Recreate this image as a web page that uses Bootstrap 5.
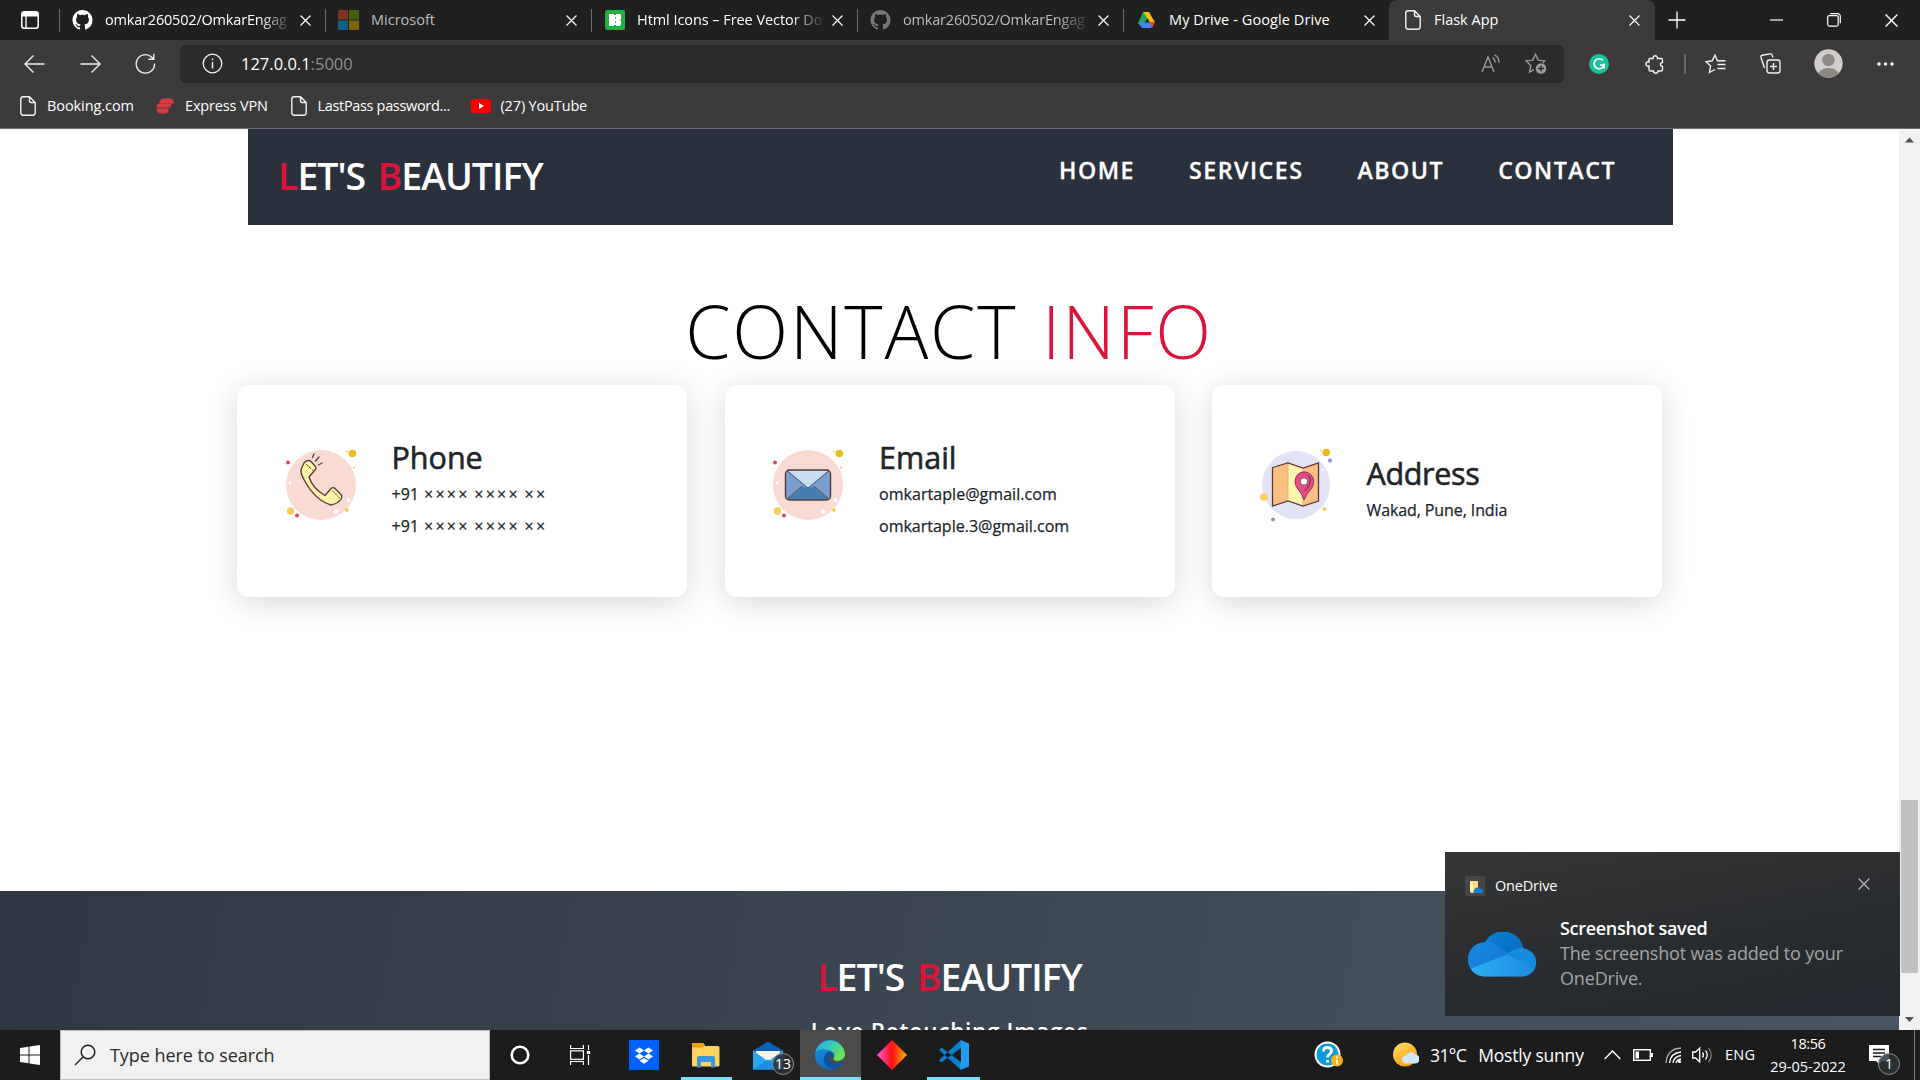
<!DOCTYPE html>
<html lang="en">
<head>
<meta charset="utf-8">
<meta name="viewport" content="width=device-width, initial-scale=1">
<title>Flask App</title>
<link href="https://cdn.jsdelivr.net/npm/bootstrap@5.3.0/dist/css/bootstrap.min.css" rel="stylesheet">
<style>
  body { font-family: "Open Sans", "Noto Sans", sans-serif; width: 1920px; height: 1080px; overflow: hidden; background: #fff; }
  svg { display: block; flex: none; }

  /* browser chrome */
  .tabstrip { height: 40px; background: #202020; font-size: 14.5px; line-height: 40px; color: #fff; }
  .strip-menu { width: 59px; padding-left: 21px; }
  .tab { width: 266px; padding: 0 14px 0 13px; position: relative; flex: none; }
  .tab::before { content: ""; position: absolute; left: 0; top: 9px; width: 1px; height: 23px; background: #6b6b6b; }
  .tab .title { flex: 1; margin: 0 7px 0 12px; white-space: nowrap; line-height: 40px; }
  .tab .fade-end { -webkit-mask-image: linear-gradient(90deg, #000 154px, transparent 188px); mask-image: linear-gradient(90deg, #000 154px, transparent 188px); }
  .tab.asleep .title { color: #bdbdbd; }
  .tab.active { width: 266px; background: #3b3b3b; border-radius: 8px 8px 0 0; padding-left: 14px; }
  .tab.active::before { display: none; }
  .tab.active .title { margin-left: 11px; }
  .tight { letter-spacing: -.19px; }
  .loose { letter-spacing: .09px; }
  .toolbar { height: 47px; background: #3b3b3b; padding-left: 7px; }
  .slot { display: flex; justify-content: center; align-items: center; flex: none; }
  .omnibox { width: 1384px; height: 38px; background: #2b2b2b; border-radius: 6px; margin-left: 8px; padding: 0 17px 0 22px; font-size: 16.5px; color: #fff; }
  .omnibox .port { color: #8f8f8f; }
  .bookmarks { height: 42px; background: #3b3b3b; border-bottom: 1px solid #6e6e70; padding: 0 0 4px 20px; font-size: 14.5px; color: #fff; }

  /* page */
  .viewport { height: 901px; }
  .site { width: 1899px; height: 901px; overflow: hidden; }
  .site-nav { width: 1425px; height: 96px; margin-left: 248px; background: #2a303c; padding: 23px 57px 0 30px; }
  .brand-name { font-size: 37.5px; line-height: 48px; font-weight: 600; letter-spacing: -1px; word-spacing: 3.5px; color: #fff; white-space: nowrap; }
  .crim { color: #dc143c; }
  .menu-links { gap: 54px; font-size: 23.2px; font-weight: 600; line-height: 32px; padding-top: 2px; letter-spacing: 1.5px; -webkit-text-stroke: .3px #fff; }
  .menu-links a { color: #fff; text-decoration: none; }
  .info-title { font-size: 73px; font-weight: 300; line-height: 96px; letter-spacing: 1.8px; word-spacing: 4px; color: #000; margin: 58px 0 6px; padding-right: 1px; }
  .cards { gap: 37.5px; padding-left: 237px; }
  .info-card { width: 450px; height: 212px; border-radius: 12px; background: #fff; box-shadow: 0 5px 30px rgba(0,0,0,.16); padding: 0 0 2px 44px; gap: 30.5px; }
  .info-card svg { margin-bottom: 10px; }
  .info-card h2 { font-size: 30.5px; font-weight: 500; line-height: 38px; margin: 0 0 2px; color: #212529; -webkit-text-stroke: .6px #212529; }
  .info-card p { font-size: 16px; font-weight: 500; line-height: 32px; margin: 0; color: #212529; -webkit-text-stroke: .25px #212529; letter-spacing: .05px; }
  .info-card .num { letter-spacing: 0; }
  .info-card .num span { letter-spacing: 2.2px; word-spacing: -1.5px; margin-left: 1px; }
  .site-footer { height: 300px; margin-top: 294px; padding-top: 62px; background: linear-gradient(100deg, #2f3842 0%, #3b4552 45%, #485664 100%); }
  .tagline { font-size: 22.5px; line-height: 32px; font-weight: 600; letter-spacing: .66px; margin-top: 15px; color: #fff; }
  .scrollbar { width: 21px; background: #f1f1f1; padding: 0 2px 0 2px; }
  .thumb { height: 173px; background: #c1c1c1; margin-top: 652px; }

  /* toast */
  .toast-box { position: absolute; left: 1445px; top: 852px; width: 455px; height: 164px; background: linear-gradient(170deg, #353637 0%, #2e2f31 35%, #262b2f 65%, #262930 100%); padding: 23px 30px 0 20px; color: #fff; }
  .app-tile { width: 20px; height: 20px; background: #464646; }
  .toast-text { font-size: 18px; line-height: 25px; color: #a3a4a5; letter-spacing: -.17px; }
  .toast-text b { font-weight: 600; color: #fff; letter-spacing: -.3px; }

  /* taskbar */
  .taskbar { height: 50px; background: #1c1c1c; color: #fff; }
  .searchbox { width: 430px; height: 50px; background: #f1f1f1; border: 1px solid #bdbdbd; font-size: 18px; color: #2b2b2b; padding: 0 0 0 13px; }
  .task { width: 61.7px; height: 50px; display: flex; justify-content: center; align-items: center; flex: none; position: relative; }
  .task.open::after { content: ""; position: absolute; left: 5px; right: 5px; bottom: 0; height: 3px; background: #76e1f9; }
  .task.front { background: #4b4b4b; }
  .task.front::after { left: 0; right: 0; }
  .count { position: absolute; width: 22px; height: 22px; border-radius: 50%; border: 1px solid #8b8b8b; background: rgba(45,50,54,.85); font-size: 14px; line-height: 20px; text-align: center; color: #fff; }
  .weather { font-size: 17.5px; }
  .clock { font-size: 14.5px; line-height: 23px; width: 78px; text-align: center; }
</style>
<script src="https://cdn.jsdelivr.net/npm/bootstrap@5.3.0/dist/js/bootstrap.bundle.min.js"></script>
</head>
<body class="d-flex flex-column">

<svg width="0" height="0" class="position-absolute">
  <defs>
    <symbol id="i-x" viewBox="0 0 11 11"><path d="M.5 .5l10 10M10.500 .5l-10 10" stroke="#fff" stroke-width="1.200" fill="none"/></symbol>
    <symbol id="i-github" viewBox="0 0 16 16"><path d="M8 0C3.580 0 0 3.580 0 8c0 3.540 2.290 6.530 5.470 7.590.4.070.550-.170.550-.380 0-.190-.010-.820-.010-1.490-2.010.370-2.530-.490-2.690-.940-.090-.230-.480-.940-.820-1.130-.280-.150-.680-.520-.010-.530.630-.010 1.080.580 1.230.820.720 1.210 1.870.870 2.330.660.070-.520.280-.870.510-1.070-1.780-.2-3.640-.890-3.640-3.950 0-.870.310-1.590.820-2.150-.080-.2-.360-1.020.080-2.120 0 0 .670-.210 2.200.820.640-.180 1.320-.270 2-.270s1.360.090 2 .270c1.530-1.040 2.200-.820 2.200-.820.440 1.100.160 1.920.080 2.120.510.560.820 1.270.820 2.150 0 3.070-1.870 3.750-3.650 3.950.290.250.540.730.540 1.480 0 1.070-.010 1.930-.010 2.200 0 .210.150.460.550.380A8.010 8.010 0 0 0 16 8c0-4.420-3.580-8-8-8z" fill="currentColor"/></symbol>
    <symbol id="i-doc" viewBox="0 0 16 20"><path d="M3 .8h6.500l5.700 5.700V17a2.200 2.200 0 0 1-2.200 2.200H3A2.200 2.200 0 0 1 .8 17V3A2.200 2.200 0 0 1 3 .8zM9.500 1v4a1.500 1.500 0 0 0 1.500 1.500h4" fill="none" stroke="#f2f2f2" stroke-width="1.400"/></symbol>
    <linearGradient id="g-od1" x1="0" y1="0" x2="1" y2="1"><stop offset="0" stop-color="#0a86d8"/><stop offset="1" stop-color="#0a5cb0"/></linearGradient>
    <linearGradient id="g-od2" x1="0" y1="0" x2="1" y2="1"><stop offset="0" stop-color="#1c8be0"/><stop offset="1" stop-color="#1272d0"/></linearGradient>
    <linearGradient id="g-od3" x1="0" y1="0" x2="1" y2="0"><stop offset="0" stop-color="#2eb0f0"/><stop offset="1" stop-color="#1a8ae0"/></linearGradient>
    <clipPath id="c-od"><path d="M16 44.500A16.500 17 0 0 1 17 10.500A20.500 20.500 0 0 1 55.500 16.600A14 14 0 0 1 55 44.500z"/></clipPath>
    <symbol id="i-cloud" viewBox="0 0 69 46"><g clip-path="url(#c-od)"><rect y="-2" width="70" height="48" fill="url(#g-od1)"/><path d="M-2 48V9h16c8-1 12 3 17 6l10 7-38 20z" fill="url(#g-od2)"/><path d="M40 21c6-4 12-6 18-5l14 4v20l-8-3z" fill="#148ce0"/><path d="M2 37l38-15 28 16v12H2z" fill="url(#g-od3)"/></g></symbol>
    <linearGradient id="g-e1" x1="0" y1="0" x2="1" y2=".5"><stop offset="0" stop-color="#2aa5e0"/><stop offset=".5" stop-color="#35c7c5"/><stop offset="1" stop-color="#6be64c"/></linearGradient>
    <linearGradient id="g-e2" x1="0" y1="0" x2=".7" y2="1"><stop offset="0" stop-color="#1b9de2"/><stop offset="1" stop-color="#0f5cb4"/></linearGradient>
    <linearGradient id="g-dm" x1="0" y1="0" x2="1" y2="0"><stop offset="0" stop-color="#ff57e0"/><stop offset=".5" stop-color="#ff1010"/><stop offset="1" stop-color="#ffb400"/></linearGradient>
    <linearGradient id="g-sun" x1="0" y1="0" x2=".6" y2="1"><stop offset="0" stop-color="#ffe16b"/><stop offset="1" stop-color="#ff9d0a"/></linearGradient>
    <symbol id="i-dots" viewBox="0 0 80 80"><circle cx="40" cy="40" r="35" fill="#f9dbd3"/><g fill="#fff"><circle cx="9" cy="38" r="1.200"/><circle cx="67.500" cy="55" r="2"/><circle cx="55" cy="66.500" r="2.300"/></g><g fill="#fbcd59"><circle cx="9.500" cy="66" r="3.700"/><circle cx="65.800" cy="65" r="2"/><circle cx="73" cy="22.500" r="1.100"/><circle cx="66" cy="6.500" r="1"/></g><circle cx="71.300" cy="8.500" r="3.800" fill="#f2bb1c"/><g fill="#ef3f57"><circle cx="7" cy="17.500" r="2"/><circle cx="16" cy="70.500" r="2"/></g></symbol>
  </defs>
</svg>

<header class="flex-shrink-0">
  <div class="tabstrip d-flex align-items-center">
    <div class="strip-menu"><svg width="18" height="18" viewBox="0 0 18 18"><rect x=".8" y=".8" width="16.400" height="16.400" rx="2.500" fill="none" stroke="#fff" stroke-width="1.500"/><path d="M1 1h16v4.500H1z" fill="#fff"/><path d="M5 5v12" stroke="#fff" stroke-width="1.300"/></svg></div>
    <div class="tab d-flex align-items-center"><svg width="21" height="20"><use href="#i-github"/></svg><span class="title fade-end tight">omkar260502/OmkarEngag</span><svg width="11" height="11"><use href="#i-x"/></svg></div>
    <div class="tab asleep d-flex align-items-center"><svg width="21" height="20" viewBox="0 0 21 20"><path d="M0 0h10v9.500H0z" fill="#7d3222"/><path d="M11 0h10v9.500H11z" fill="#42600f"/><path d="M0 10.500h10V20H0z" fill="#0e5f83"/><path d="M11 10.500h10V20H11z" fill="#83630f"/></svg><span class="title">Microsoft</span><svg width="11" height="11"><use href="#i-x"/></svg></div>
    <div class="tab d-flex align-items-center" style="padding-left:14px"><svg width="20" height="20" viewBox="0 0 20 20"><rect width="20" height="20" rx="2" fill="#20b141"/><path d="M4 4h5v1h2V4h4q1 0 1 2v3l-1 1 1 1v3q0 2-2 2h-3v-1H9v1H4z" fill="#fff"/><path d="M10.500 7v1.500M10.500 11.500v1.500" stroke="#20b141"/></svg><span class="title fade-end" style="letter-spacing:-.06px">Html Icons – Free Vector Do</span><svg width="11" height="11"><use href="#i-x"/></svg></div>
    <div class="tab asleep d-flex align-items-center"><svg width="21" height="20" style="color:#777"><use href="#i-github"/></svg><span class="title fade-end tight">omkar260502/OmkarEngag</span><svg width="11" height="11"><use href="#i-x"/></svg></div>
    <div class="tab d-flex align-items-center"><svg width="21" height="20" viewBox="0 0 21 20"><path d="M7 2h4l2 3.500L6 17.500 2 13z" fill="#1fa463"/><path d="M7.500 2h5.500l6 10.500h-5z" fill="#ffc107"/><path d="M5 12.500h13l-3 5.500H6L2 12.500z" fill="#4285f4"/><path d="M14 12.500h5L16 18z" fill="#ea4335"/></svg><span class="title loose">My Drive - Google Drive</span><svg width="11" height="11"><use href="#i-x"/></svg></div>
    <div class="tab active d-flex align-items-center"><svg width="20" height="20"><use href="#i-doc"/></svg><span class="title">Flask App</span><svg width="11" height="11" style="margin-right:1px"><use href="#i-x"/></svg></div>
    <div class="slot" style="width:44px"><svg width="18" height="18" viewBox="0 0 18 18"><path d="M9 .5v17M.5 9h17" stroke="#fff" stroke-width="1.300"/></svg></div>
    <div class="slot ms-auto" style="width:57px"><svg width="13" height="2"><path d="M0 1h13" stroke="#fff" stroke-width="1.200"/></svg></div>
    <div class="slot" style="width:57px"><svg width="14" height="14" viewBox="0 0 14 14" fill="none" stroke="#fff" stroke-width="1.200"><rect x=".7" y="2.600" width="10.500" height="10.500" rx="1.500"/><path d="M3.200 .7h7.600a2.500 2.500 0 0 1 2.500 2.500v7"/></svg></div>
    <div class="slot" style="width:58px"><svg width="13" height="13"><use href="#i-x"/></svg></div>
  </div>
  <div class="toolbar d-flex align-items-center">
    <div class="slot" style="width:55px"><svg width="21" height="18" viewBox="0 0 21 18" fill="none" stroke="#f0f0f0" stroke-width="1.400"><path d="M20.500 9H1M9.500 .5L1 9l8.500 8.500"/></svg></div>
    <div class="slot" style="width:56px"><svg width="21" height="18" viewBox="0 0 21 18" fill="none" stroke="#f0f0f0" stroke-width="1.400"><path d="M.5 9H20M11.500 .5L20 9l-8.500 8.500"/></svg></div>
    <div class="slot" style="width:54px"><svg width="21" height="21" viewBox="0 0 21 21" fill="none" stroke="#f0f0f0" stroke-width="1.400"><path d="M19.600 10.500A9.200 9.200 0 1 1 16.500 4L18.500 6M18.800 .8v5.500h-5.500"/></svg></div>
    <div class="omnibox d-flex align-items-center">
      <svg width="21" height="21" viewBox="0 0 21 21"><circle cx="10.500" cy="10.500" r="9.300" fill="none" stroke="#f0f0f0" stroke-width="1.300"/><path d="M10.500 9v6.500M10.500 5.500v1.800" stroke="#f0f0f0" stroke-width="1.500"/></svg>
      <span style="margin-left:18px;padding-top:1px">127.0.0.1<span class="port">:5000</span></span>
      <svg class="ms-auto" width="20" height="19" viewBox="0 0 20 19" fill="none" stroke="#9a9a9a" stroke-width="1.400"><path d="M1 18L7 3l6 15M3 13h8M11.500 3.500q2.500 1.500 2.500 5M13.500 .8q4.500 2.200 4.500 7.700"/></svg>
      <svg style="margin-left:24px" width="22" height="21" viewBox="0 0 22 21"><path d="M9 16.700l-4.500 2.500 1.300-6.800L1.200 7.900l6.500-.8 2.800-5.900 2.700 5.900 6.500.8-2 2" fill="none" stroke="#9a9a9a" stroke-width="1.400"/><circle cx="16" cy="15.500" r="5.300" fill="#9a9a9a"/><path d="M16 12.500v6M13 15.500h6" stroke="#2b2b2b" stroke-width="1.300"/></svg>
    </div>
    <div class="slot" style="width:70px"><svg width="20" height="20" viewBox="0 0 20 20"><circle cx="10" cy="10" r="10" fill="#15c39a"/><path d="M13.800 6.300A5 5 0 1 0 15 11h-4M15.100 9.500v5" fill="none" stroke="#fff" stroke-width="1.700"/></svg></div>
    <div class="slot" style="width:42px"><svg width="20" height="20" viewBox="0 0 20 20"><path d="M4.500 4.500H8a2.300 2.300 0 1 1 4.500 0H16A1.500 1.500 0 0 1 17.500 6v2.500a2 2 0 1 0 0 4v3a1.500 1.500 0 0 1-1.500 1.500h-3a2.100 2.100 0 1 1-4.500 0h-3A1.500 1.500 0 0 1 4 15.500V12a2.200 2.200 0 1 1 0-4V5z" fill="none" stroke="#f0f0f0" stroke-width="1.400"/></svg></div>
    <div class="slot" style="width:18px"><svg width="2" height="20"><path d="M1 0v20" stroke="#767676" stroke-width="1.500"/></svg></div>
    <div class="slot" style="width:42px"><svg width="21" height="20" viewBox="0 0 21 20" fill="none" stroke="#f0f0f0" stroke-width="1.400"><path d="M12.500 7L10 1 7.200 6.800 1 7.700l4.600 4.400-1.200 6.400L10 15.500M12.500 10.500h8M12.500 14.500h8M12 6.700h8.500"/></svg></div>
    <div class="slot" style="width:68px"><svg width="21" height="21" viewBox="0 0 21 21" fill="none" stroke="#f0f0f0" stroke-width="1.400"><rect x="7" y="7" width="13" height="13" rx="2.500"/><path d="M13.500 10v7M10 13.500h7M4.500 15L1 4.500Q.500 2.800 2.300 2.200L10 .9q1.700-.3 2.300 1.500L12.900 4.500"/></svg></div>
    <div class="slot" style="width:48px"><svg width="29" height="29" viewBox="0 0 29 29"><circle cx="14.500" cy="14.500" r="14.200" fill="#d0cdca"/><circle cx="14.500" cy="11" r="6.200" fill="#8e8882"/><path d="M4.500 24.500a10.500 8 0 0 1 20 0 14 14 0 0 1-20 0z" fill="#8e8882"/></svg></div>
    <div class="slot" style="width:66px"><svg width="17" height="4" viewBox="0 0 17 4"><g fill="#fff"><circle cx="2" cy="2" r="1.700"/><circle cx="8.500" cy="2" r="1.700"/><circle cx="15" cy="2" r="1.700"/></g></svg></div>
  </div>
  <div class="bookmarks d-flex align-items-center">
    <svg width="16" height="20"><use href="#i-doc"/></svg><span style="margin-left:11px;width:108.500px;letter-spacing:-.08px">Booking.com</span>
    <svg width="19" height="18" viewBox="0 0 20 18"><path d="M7 1h8a4 4 0 0 1 3.500 5H3.500Q4 2 7 1zM2 7h14.500q-1 3.500-4 3.500H.5Q.500 8 2 7zM.5 12H13q1 5-3.500 5H4Q.500 16 .5 12z" fill="#d93a40"/><path d="M3 6.500h15M1 11.200h14" stroke="#d93a40" stroke-opacity=".6" stroke-width="1.500"/></svg><span style="margin-left:10.500px;width:105.500px;letter-spacing:-.15px">Express VPN</span>
    <svg width="16" height="20"><use href="#i-doc"/></svg><span style="margin-left:11px;width:153px;letter-spacing:-.33px">LastPass password...</span>
    <svg width="20" height="14" viewBox="0 0 20 14"><rect width="20" height="14" rx="3.500" fill="#f00"/><path d="M8 4l5 3-5 3z" fill="#fff"/></svg><span style="margin-left:10px;letter-spacing:-.16px">(27) YouTube</span>
  </div>
</header>

<div class="viewport d-flex flex-shrink-0">
  <main class="site">
    <nav class="site-nav d-flex justify-content-between align-items-start">
      <div class="brand-name"><span class="crim">L</span>ET'S <span class="crim">B</span>EAUTIFY</div>
      <div class="menu-links d-flex"><a href="#">HOME</a><a href="#">SERVICES</a><a href="#">ABOUT</a><a href="#">CONTACT</a></div>
    </nav>
    <h1 class="info-title text-center">CONTACT <span class="crim">INFO</span></h1>
    <div class="cards d-flex">
      <div class="info-card d-flex align-items-center">
        <svg width="80" height="80" viewBox="0 0 80 80"><use href="#i-dots"/>
          <g stroke="#5d3f3d" stroke-width="1.400" stroke-linejoin="round" stroke-linecap="round"><path d="M22 20q2-4.500 5.500-4.500 1.500 0 2.500 1l4.500 5q1 2-.5 3.500l-6 7q4 12 16 18.500l6-7q1.500-1.500 3.500-.5l6.500 6.500q1.500 2 .5 4-3 5-10.500 6.500-16-5-26.500-24.500-4-7-3.500-10 .5-3 2-5.500z" fill="#fff4a8"/><path d="M25.500 19.500l7 6.500M51.500 46l7 7" fill="none" stroke-width="1" stroke-dasharray="2 2"/><path d="M31.500 12.500l1.500-3.500M34.500 16l3.500-4M37.500 20l3.500-2" fill="none"/></g></svg>
        <div><h2>Phone</h2><p class="num">+91 <span>×××× ×××× ××</span></p><p class="num">+91 <span>×××× ×××× ××</span></p></div>
      </div>
      <div class="info-card d-flex align-items-center">
        <svg width="80" height="80" viewBox="0 0 80 80" style="margin-left:-1px"><use href="#i-dots"/><rect x="17.500" y="25" width="45" height="30" rx="4" fill="#7a9fcf"/><path d="M19 54l15-13 6 2 6-2 15 13q-1 1-2 1H21z" fill="#457fb0"/><path d="M20 25.500h40L40 43z" fill="#c7dff0"/><path d="M19 26l21 17 21-17M19 54l15-13M61 54L46 41" fill="none" stroke="#62525c" stroke-width="1"/><rect x="17.500" y="25" width="45" height="30" rx="4" fill="none" stroke="#573f42" stroke-width="1.500"/></svg>
        <div style="margin-left:1px"><h2>Email</h2><p>omkartaple@gmail.com</p><p style="letter-spacing:0">omkartaple.3@gmail.com</p></div>
      </div>
      <div class="info-card d-flex align-items-center">
        <svg width="80" height="80" viewBox="0 0 80 80"><circle cx="40" cy="40" r="34" fill="#e3e3f8"/><circle cx="70.300" cy="7.500" r="3.800" fill="#f2bb1c"/><g fill="#fbcd59"><circle cx="65" cy="5.500" r="1"/><circle cx="8" cy="52" r="3.800"/><circle cx="68.500" cy="64" r="2"/></g><g fill="#8f8fc6"><circle cx="74" cy="15.500" r="2"/><circle cx="17" cy="74.500" r="2"/></g><circle cx="67" cy="25" r="1.200" fill="#fff"/>
          <path d="M16.500 22.500L32 18v38l-15.500 5zM47 23l15.500-5v38L47 61z" fill="#fbbf82"/><path d="M32 18l15 5v38l-15-5z" fill="#fff4ac"/><path d="M32 18v38M47 23v38" stroke="#c9b58a" stroke-width=".8"/><path d="M16.500 22.500L32 18l15 5 15.500-5v38L47 61l-15-5-15.500 5z" fill="none" stroke="#5a3a36" stroke-width="1.300"/><path d="M48 55q-2-6-6-11c-6-7-2-17 6-17s13 9 7 17q-5 5-7 11z" fill="#e64a87" stroke="#8b2e50" stroke-width="1"/><path d="M52 30q4 4 1 10l-4 6" fill="none" stroke="#6d2b44" stroke-width="1"/><circle cx="48" cy="36.500" r="3.700" fill="#fff" stroke="#6f5a4a" stroke-width="1"/></svg>
        <div style="margin-bottom:1px"><h2 style="letter-spacing:-.35px">Address</h2><p style="letter-spacing:-.1px">Wakad, Pune, India</p></div>
      </div>
    </div>
    <footer class="site-footer text-center">
      <div class="brand-name"><span class="crim">L</span>ET'S <span class="crim">B</span>EAUTIFY</div>
      <div class="tagline">Love Retouching Images</div>
    </footer>
  </main>
  <aside class="scrollbar d-flex flex-column align-items-stretch">
    <svg width="17" height="19" viewBox="0 0 17 19"><path d="M4 13.500l4.500-5 4.500 5z" fill="#505050"/></svg>
    <div class="thumb"></div>
    <svg class="mt-auto" width="17" height="20" viewBox="0 0 17 20"><path d="M4 7l4.500 5L13 7z" fill="#505050"/></svg>
  </aside>
</div>

<div class="taskbar d-flex flex-shrink-0">
  <div class="slot" style="width:60px"><svg width="20" height="20" viewBox="0 0 20 20"><path d="M0 3l8.500-1.200v7.700H0zM9.500 1.600L20 0v9.500H9.500zM0 10.500h8.500v7.700L0 17zM9.500 10.500H20V20L9.500 18.400z" fill="#fff"/></svg></div>
  <div class="searchbox d-flex align-items-center"><svg width="22" height="22" viewBox="0 0 22 22"><circle cx="14" cy="8" r="6.800" fill="none" stroke="#1f1f1f" stroke-width="1.500"/><path d="M9 13l-8 8" stroke="#1f1f1f" stroke-width="1.500"/></svg><span style="margin-left:14px;letter-spacing:-.06px">Type here to search</span></div>
  <div class="task" style="width:59px"><svg width="20" height="20" viewBox="0 0 20 20"><circle cx="10" cy="10" r="8.300" fill="none" stroke="#fff" stroke-width="2.500"/></svg></div>
  <div class="task" style="width:62px"><svg width="21" height="20" viewBox="0 0 21 20" fill="none" stroke="#fff" stroke-width="1.200"><path d="M.6 0v3.500h12.800V0M.6 20v-3.500h12.800V20M18.500 0v5M18.500 10v10"/><rect x=".6" y="5.800" width="12.800" height="8.500"/><path d="M16.800 6h3.400v3h-3.400z" fill="#fff" stroke="none"/></svg></div>
  <div class="task" style="width:65px"><svg width="30" height="30" viewBox="0 0 30 30"><path d="M0 0h30v30H0z" fill="#0061fe"/><path d="M10.500 7.500l4.500 3-4.500 3-4.500-3zM19.500 7.500l4.500 3-4.500 3-4.500-3zM10.500 13.500l4.500 3-4.500 3-4.500-3zM19.500 13.500l4.500 3-4.500 3-4.500-3zM15 18l4.500 2.800-4.500 3-4.500-3z" fill="#fff"/></svg></div>
  <div class="task open" style="width:61px"><svg width="28" height="26" viewBox="0 0 28 26" style="margin-right:1px"><path d="M1 1h10l2 3h13q1.500 0 1.500 1.500V23q0 1.500-1.500 1.500H1Q0 24.500 0 23V2q0-1 1-1z" fill="#ffd35c"/><path d="M1 1h10l2 2-2 2.500H0V2q0-1 1-1z" fill="#e8a200"/><path d="M5 25.500V16q0-2 2-2h14q2 0 2 2v9.500h-4V20H9v5.500z" fill="#3a96dd"/></svg></div>
  <div class="task" style="width:63px"><svg width="30" height="29" viewBox="0 0 30 28" style="margin-right:2px"><path d="M0 9L15 0l15 9v8H0z" fill="#0b61b8"/><path d="M3 9.500h24v8L15 22 3 18z" fill="#f3f3f3"/><path d="M0 9l15 11L30 9v19H0z" fill="#28a8ea"/><path d="M0 28l15-10 15 10z" fill="#1b8fe0"/></svg><span class="count" style="left:35px;top:23px">13</span></div>
  <div class="task open front" style="width:61px"><svg width="30" height="30" viewBox="0 0 30 30" style="margin-right:2px"><circle cx="15" cy="15" r="15" fill="url(#g-e2)"/><path d="M.5 12A15 15 0 0 1 30 14c0 4-3 7-7 7-3 0-5.500-1-5-2.500 2-2 2-5-.5-6.500C12 8 4 8.500 .5 12z" fill="url(#g-e1)"/><path d="M16 11.500c-4 0-7 3.500-7 8 0 6 6 10.500 11 9q5-2 7.500-6.500c-3 1.500-8 1.500-10-1-1.500-2-.5-3.500.5-4.500 0-2 0-4-2-5z" fill="#1150a0"/><path d="M15.500 15q-1.500 1.500-1 4 1.500 4.500 7 4.500 4-.5 7-3l1.500.5V17q-3 4-7 4-5 0-4.500-2.500 1-1.500 0-3.500z" fill="#4b4b4b"/></svg></div>
  <div class="task" style="width:61px"><svg width="30" height="30" viewBox="0 0 30 30"><path d="M15 0l15 15-15 15L0 15z" fill="url(#g-dm)"/></svg></div>
  <div class="task open" style="width:63px;padding-left:1px"><svg width="30" height="30" viewBox="0 0 30 30"><path d="M0 10l2.500-2.500 19.500 15V30zM0 20l2.500 2.500L22 7.500V0z" fill="#0a7fcb"/><path d="M21.500 0L30 3.500v23L21.500 30V22L13 15l8.500-7z" fill="#1f9cf0"/><path d="M22 8v14l-9-7z" fill="#1c1c1c"/></svg></div>
  <div class="slot ms-auto" style="width:44px"><svg width="30" height="28" viewBox="0 0 30 28" style="margin-right:1px"><circle cx="13.500" cy="13.500" r="13" fill="#fff"/><circle cx="13.500" cy="13.500" r="11" fill="#0f9bd8"/><path d="M9.500 10.500q0-4 4-4t4 3.500q0 2-2 3.200-2 1.200-2 3.300M13.500 19v2.500" fill="none" stroke="#fff" stroke-width="2.800"/><circle cx="23" cy="19.500" r="6" fill="#f9b21b"/><path d="M23 18.500v5M23 15.500v1.800" stroke="#fff" stroke-width="1.800"/></svg></div>
  <div class="weather d-flex align-items-center" style="margin-left:42px;width:211px"><svg width="26" height="26" viewBox="0 0 26 26"><circle cx="12" cy="12.500" r="12" fill="url(#g-sun)"/><path d="M13 21.500a4 4 0 0 1 0-8 5 5 0 0 1 9-1 4.500 4.500 0 0 1 .5 9z" fill="#cfe6fb"/></svg><span style="margin-left:11px;letter-spacing:-.6px;padding-top:1px">31°C</span><span style="margin-left:12px;letter-spacing:-.19px;white-space:nowrap;padding-top:1px">Mostly sunny</span></div>
  <div class="d-flex align-items-center" style="width:165px"><svg width="17" height="10" viewBox="0 0 17 10"><path d="M.7 9l7.800-8 7.800 8" fill="none" stroke="#fff" stroke-width="1.400"/></svg>
    <svg style="margin-left:12px" width="20" height="12" viewBox="0 0 20 12"><rect x=".7" y=".7" width="16.600" height="10.600" fill="none" stroke="#fff" stroke-width="1.400"/><path d="M2.500 2.500h3.500v7H2.500zM18 4h2v4h-2z" fill="#fff"/></svg>
    <svg style="margin-left:12px" width="17" height="17" viewBox="0 0 17 17" fill="none" stroke-width="1.300"><path d="M1 16Q2 2 16 1" stroke="#aaa"/><path d="M4.500 16Q5.500 6 16 5M8 16q1-6.500 8-7.500M11 16q.8-3.500 5-4" stroke="#fff"/><circle cx="14.500" cy="14.500" r="1.600" fill="#fff"/></svg>
    <svg style="margin-left:10px" width="21" height="18" viewBox="0 0 21 18" fill="none" stroke="#fff" stroke-width="1.300"><path d="M.7 6h3l4-4v14l-4-4h-3z"/><path d="M10.500 6.500q2 2.500 0 5M13.500 4.500q3.500 4.500 0 9"/><path d="M16.500 2q5.500 7 0 14" stroke="#777"/></svg>
    <span style="margin-left:12px;font-size:14.500px;letter-spacing:.26px">ENG</span></div>
  <div class="clock d-flex flex-column justify-content-center"><span style="letter-spacing:-.4px">18:56</span><span>29-05-2022</span></div>
  <div class="task" style="width:67px"><svg width="20" height="19" viewBox="0 0 20 19" style="margin:0 3px 2px 0"><path d="M0 0h20v16h-7l-3 3-3-3H0z" fill="#fff"/><path d="M4 4.500h12M4 8h12M4 11.500h8" stroke="#1c1c1c" stroke-width="1.300"/></svg><span class="count" style="left:31px;top:23px">1</span></div>
  <div style="width:1px;background:#777"></div><div style="width:5px"></div>
</div>

<div class="toast-box">
  <div class="d-flex align-items-center">
    <div class="app-tile"><svg width="20" height="20" viewBox="0 0 20 20"><path d="M5 5h8v9l-5 3-3-1z" fill="#ffd879"/><path d="M5 5l3 1v11l-3-1z" fill="#fff0b8"/><path d="M9.500 17a2 2 0 0 1 0-3.500 3.500 3.500 0 0 1 6-.5 2 2 0 0 1 1 4z" fill="#1482d8"/></svg></div>
    <span style="margin-left:10px;font-size:14.500px;letter-spacing:-.2px">OneDrive</span>
    <svg class="ms-auto mb-1" width="12" height="12" style="opacity:.65"><use href="#i-x"/></svg>
  </div>
  <div class="d-flex" style="margin:19px -20px 0 3px">
    <svg width="69" height="46" style="margin-top:16px"><use href="#i-cloud"/></svg>
    <div class="toast-text" style="margin-left:23px"><b>Screenshot saved</b><br>The screenshot was added to your<br>OneDrive.</div>
  </div>
</div>
</body>
</html>
